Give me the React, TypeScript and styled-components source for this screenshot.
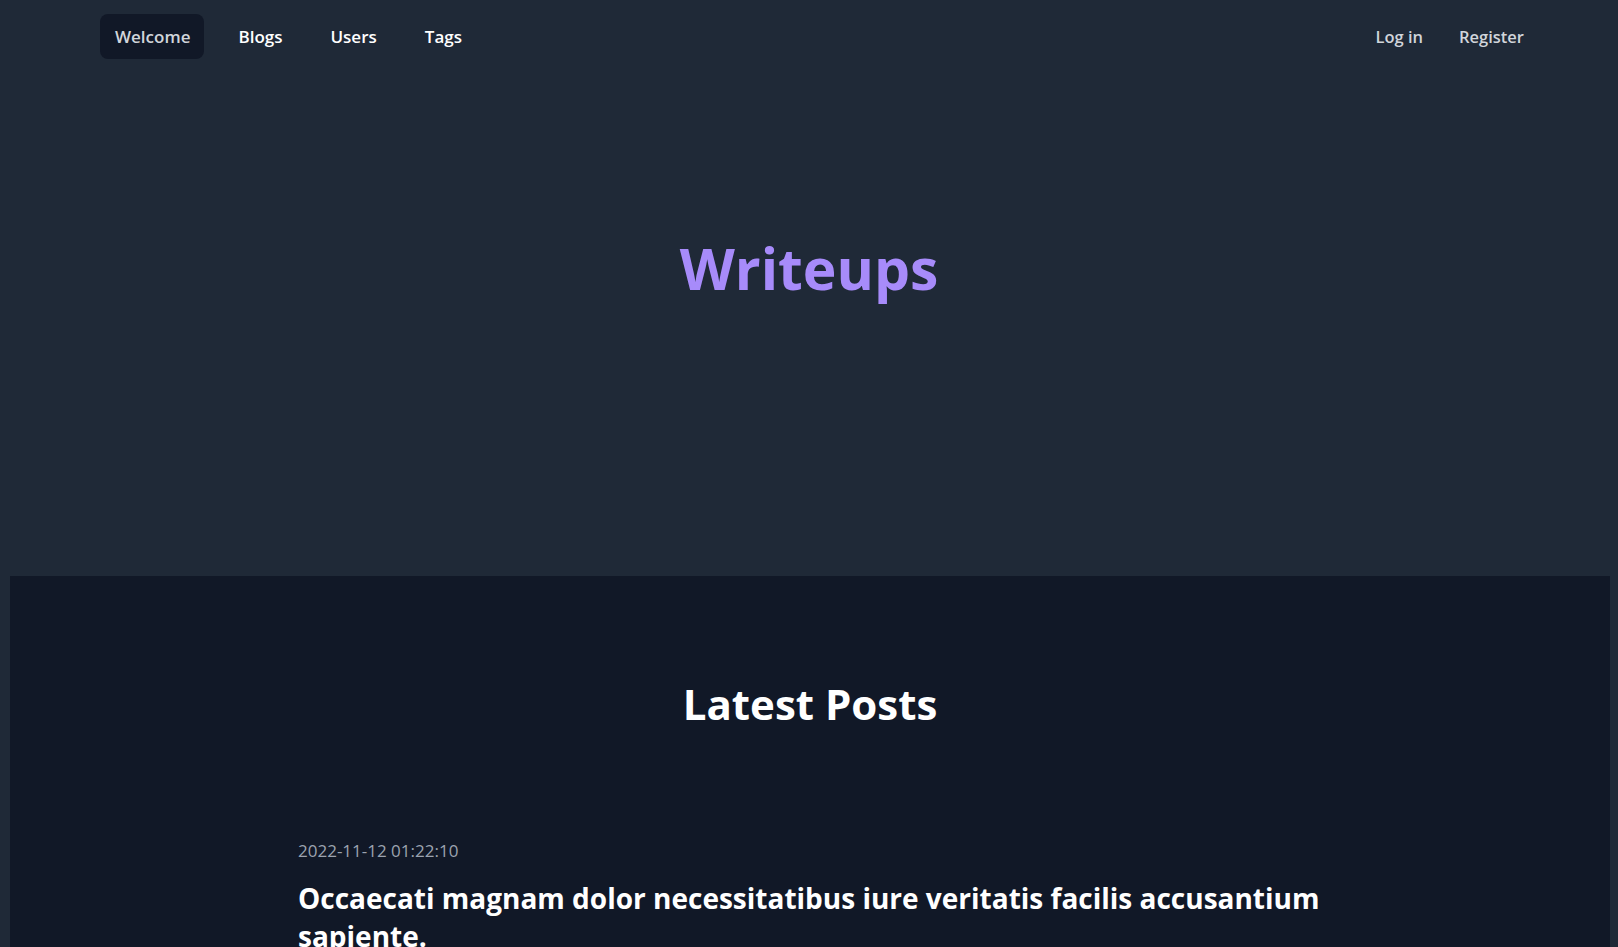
import React from "react";
import styled, { createGlobalStyle } from "styled-components";

const GlobalStyle = createGlobalStyle`
  html, body {
    margin: 0;
    padding: 0;
    background: #1f2937;
    font-family: "Open Sans", "Noto Sans", Arial, sans-serif;
  }
  * { box-sizing: border-box; }
`;

const Page = styled.div`
  min-height: 947px;
  background: #1f2937;
  display: flex;
  flex-direction: column;
`;

const Nav = styled.nav`
  display: flex;
  align-items: center;
  justify-content: space-between;
  padding: 14px 94px 0 100px;
  height: 59px;
`;

const NavGroup = styled.div<{ $gap: number }>`
  display: flex;
  align-items: center;
  gap: ${(p) => p.$gap}px;
`;

const NavLink = styled.a<{ $active?: boolean }>`
  display: block;
  padding: 9px 14px 8px 15px;
  border-radius: 8px;
  font-size: 17px;
  line-height: 28px;
  font-weight: 600;
  text-decoration: none;
  cursor: pointer;
  color: ${(p) => (p.$active ? "#d1d5db" : "#ffffff")};
  background: ${(p) => (p.$active ? "#111827" : "transparent")};
`;

const AuthLink = styled.a`
  font-size: 16.5px;
  line-height: 28px;
  font-weight: 600;
  color: #d1d5db;
  text-decoration: none;
  cursor: pointer;
`;

const Hero = styled.header`
  height: 517px;
  padding-top: 181px;
  display: flex;
  justify-content: center;
  align-items: flex-start;
`;

const HeroTitle = styled.h1`
  margin: 0;
  font-size: 57px;
  line-height: 57px;
  font-weight: 700;
  color: #a78bfa;
`;

const Posts = styled.section`
  flex: 1;
  margin: 0 8px 0 10px;
  background: #111827;
  padding-top: 107px;
`;

const SectionTitle = styled.h2`
  margin: 0;
  text-align: center;
  font-size: 42px;
  line-height: 42px;
  font-weight: 700;
  color: #ffffff;
`;

const PostList = styled.div`
  max-width: 1024px;
  margin: 114px auto 0;
  display: flex;
  flex-direction: column;
`;

const PostItem = styled.article`
  display: flex;
  flex-direction: column;
  gap: 16px;
`;

const PostDate = styled.time`
  font-size: 17px;
  line-height: 24px;
  color: #9ca3af;
`;

const PostTitle = styled.h3`
  margin: 0;
  font-size: 28px;
  line-height: 38px;
  font-weight: 700;
  color: #ffffff;
`;

export default function App() {
  return (
    <Page>
      <GlobalStyle />
      <Nav>
        <NavGroup $gap={19}>
          <NavLink $active>Welcome</NavLink>
          <NavLink>Blogs</NavLink>
          <NavLink>Users</NavLink>
          <NavLink>Tags</NavLink>
        </NavGroup>
        <NavGroup $gap={36}>
          <AuthLink>Log in</AuthLink>
          <AuthLink>Register</AuthLink>
        </NavGroup>
      </Nav>
      <Hero>
        <HeroTitle>Writeups</HeroTitle>
      </Hero>
      <Posts>
        <SectionTitle>Latest Posts</SectionTitle>
        <PostList>
          <PostItem>
            <PostDate>2022-11-12 01:22:10</PostDate>
            <PostTitle>
              Occaecati magnam dolor necessitatibus iure veritatis facilis accusantium sapiente.
            </PostTitle>
          </PostItem>
        </PostList>
      </Posts>
    </Page>
  );
}
